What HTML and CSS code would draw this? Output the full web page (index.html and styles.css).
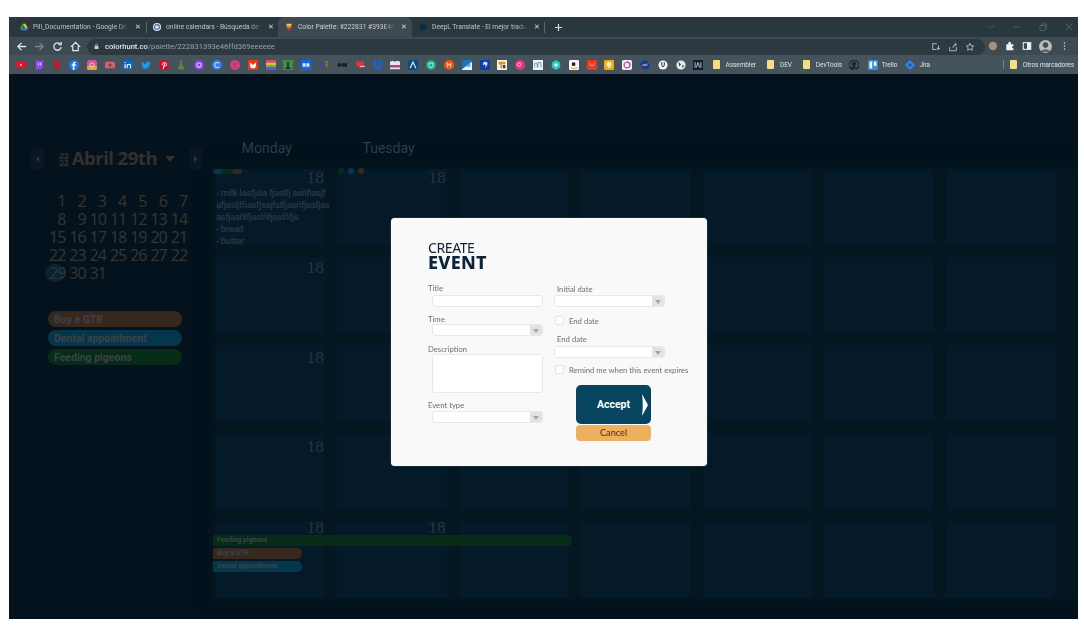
FILE: index.html
```html
<!DOCTYPE html>
<html lang="en">
<head>
<meta charset="utf-8">
<title>Calendar</title>
<link rel="stylesheet" href="styles.css">
</head>
<body>
<div class="browser">
  <div class="chrome">
    <div class="tabstrip">
      <div class="tab">
        <svg class="fav" viewBox="0 0 12 12"><path d="M4 1h4l4 7H8z" fill="#f4c20d"/><path d="M4 1 0 8l2 3 4-7z" fill="#1fa463"/><path d="M2 11h8l2-3H4z" fill="#4285f4"/></svg>
        <span class="tab-title">Pill_Documentation - Google Dri</span><span class="tab-x">✕</span>
      </div>
      <div class="tab tab-sep">
        <svg class="fav" viewBox="0 0 12 12"><circle cx="6" cy="6" r="6" fill="#e8e8e8"/><circle cx="6" cy="6" r="3.6" fill="none" stroke="#3d7fd8" stroke-width="2"/><path d="M6 2.400a3.600 3.600 0 0 1 3.100 1.800" fill="none" stroke="#c94a3d" stroke-width="2"/></svg>
        <span class="tab-title">online calendars - Búsqueda de G</span><span class="tab-x">✕</span>
      </div>
      <div class="tab tab-active">
        <svg class="fav" viewBox="0 0 12 12"><path d="M2 1h8l-.5 3h-7z" fill="#f4d33c"/><path d="M2.500 4h7l-.5 3h-6z" fill="#e9923a"/><path d="M3 7h6l-1 4H4z" fill="#c23a3a"/></svg>
        <span class="tab-title">Color Palette: #222831 #393E46 #</span><span class="tab-x">✕</span>
      </div>
      <div class="tab tab-last">
        <svg class="fav" viewBox="0 0 12 12"><path d="M6 0l5 3v6l-5 3-5-3V3z" fill="#0c2d48"/></svg>
        <span class="tab-title">DeepL Translate - El mejor traduc</span><span class="tab-x">✕</span>
      </div>
      <div class="tab-plus">
        <svg viewBox="0 0 10 10" class="ico-plus"><path d="M5 1v8M1 5h8" stroke="#d5dadc" stroke-width="1.300"/></svg>
      </div>
      <div class="win-ctrls">
        <svg viewBox="0 0 10 10"><path d="M2 3.500l3 3 3-3" fill="none" stroke="#525e65"/></svg>
        <svg viewBox="0 0 10 10"><path d="M2 5h6" stroke="#525e65"/></svg>
        <svg viewBox="0 0 10 10"><path d="M2 3.500h5v5H2zM3.500 3.500V2H8.500v5H7" fill="none" stroke="#525e65"/></svg>
        <svg viewBox="0 0 10 10"><path d="M1.500 1.500l7 7M8.500 1.500l-7 7" stroke="#525e65"/></svg>
      </div>
    </div>
    <div class="toolbar">
      <div class="nav">
        <svg viewBox="0 0 12 12"><path d="M11 6H2M6 2 2 6l4 4" fill="none" stroke="#dfe3e5" stroke-width="1.400"/></svg>
        <svg viewBox="0 0 12 12"><path d="M1 6h9M6 2l4 4-4 4" fill="none" stroke="#78848b" stroke-width="1.400"/></svg>
        <svg viewBox="0 0 12 12"><path d="M10 6.500A4 4 0 1 1 8.800 3.200M10 1v3H7" fill="none" stroke="#dfe3e5" stroke-width="1.400"/></svg>
        <svg viewBox="0 0 12 12"><path d="M6 1.500 1.500 6H3v4.500h6V6h1.500z" fill="none" stroke="#dfe3e5" stroke-width="1.300"/></svg>
      </div>
      <div class="omnibox">
        <svg class="lock" viewBox="0 0 8 10"><rect x="1" y="4" width="6" height="5" fill="#c8cfd2"/><path d="M2.500 4V2.500a1.500 1.500 0 0 1 3 0V4" fill="none" stroke="#c8cfd2"/></svg>
        <span class="url"><b>colorhunt.co</b>/palette/222831393e46ffd369eeeeee</span>
        <span class="omni-icons">
          <svg viewBox="0 0 12 12"><path d="M7 2H2v7h5M9 4v5M7 7l2 2 2-2" fill="none" stroke="#c3cace"/></svg>
          <svg viewBox="0 0 12 12"><path d="M2 6v4.500h8V6M6 7c0-3 2-4 4-4M8 1l2 2-2 2" fill="none" stroke="#c3cace"/></svg>
          <svg viewBox="0 0 12 12"><path d="M6 1.500l1.400 3 3.100.3-2.300 2.100.7 3.100L6 8.400 3.100 10l.7-3.100L1.500 4.800l3.100-.3z" fill="none" stroke="#c3cace"/></svg>
        </span>
      </div>
      <div class="tool-right">
        <svg viewBox="0 0 12 12"><circle cx="6" cy="6" r="5" fill="#b58d6c"/><circle cx="6" cy="6" r="2" fill="#8c9aa2"/></svg>
        <svg viewBox="0 0 12 12"><path d="M1.500 4H4V2.500a1.500 1.500 0 0 1 3 0V4h3v2.500H8.500v2H10V11H1.500z" fill="#eef0f1"/></svg>
        <svg viewBox="0 0 12 12"><rect x="1.500" y="2" width="9" height="8" fill="none" stroke="#eef0f1" stroke-width="1.300"/><rect x="6" y="2" width="4.500" height="8" fill="#eef0f1"/></svg>
        <svg class="avatar" viewBox="0 0 14 14"><circle cx="7" cy="7" r="7" fill="#b9bec0"/><circle cx="7" cy="5.500" r="3" fill="#4b4f52"/><path d="M2 13c1-4 9-4 10 0z" fill="#5d6265"/></svg>
        <svg class="dots" viewBox="0 0 4 12"><circle cx="2" cy="2" r="1" fill="#dfe3e5"/><circle cx="2" cy="6" r="1" fill="#dfe3e5"/><circle cx="2" cy="10" r="1" fill="#dfe3e5"/></svg>
      </div>
    </div>
    <div class="bookmarks">
      <svg class="bm" viewBox="0 0 12 12"><rect y="2" width="12" height="8" rx="2" fill="#e8102a"/><path d="M5 4.500v3l2.500-1.500z" fill="#fff"/></svg>
      <svg class="bm" viewBox="0 0 12 12"><path d="M2 1h9v7l-3 3H5l-1 1v-1H2z" fill="#9146ff"/><path d="M5.500 3.500v3M8 3.500v3" stroke="#fff"/></svg>
      <svg class="bm" viewBox="0 0 12 12"><path d="M3 0h2l2 8V0h2v12H7L5 5v7H3z" fill="#d40f1e"/></svg>
      <svg class="bm" viewBox="0 0 12 12"><circle cx="6" cy="6" r="6" fill="#1778f2"/><path d="M6.500 12V7H8l.3-1.800H6.500V4.300c0-.6.3-.9 1-.9h.8V2H7c-1.500 0-2.400.9-2.400 2.300v.9H3.300V7h1.300v5z" fill="#fff"/></svg>
      <svg class="bm" viewBox="0 0 12 12"><rect width="12" height="12" rx="3" fill="#d2569a"/><rect y="7" width="12" height="5" rx="2" fill="#e9a23b"/><circle cx="6" cy="6" r="2.500" fill="none" stroke="#f2d3e3"/></svg>
      <svg class="bm" viewBox="0 0 12 12"><rect y="2" width="12" height="8" rx="2" fill="#d6616e"/><circle cx="6" cy="6" r="2" fill="#8e3f4a"/></svg>
      <svg class="bm" viewBox="0 0 12 12"><rect width="12" height="12" rx="1" fill="#0a66c2"/><path d="M2.500 5v5M2.500 2.500v1M5 10V5M5 7c0-2 4-3 4 0v3" fill="none" stroke="#fff" stroke-width="1.300"/></svg>
      <svg class="bm" viewBox="0 0 12 12"><path d="M0 10c6 2 11-1 10.500-6L12 2.500l-1.700.3C9 1 6 2 6.300 4.500 4 4.500 2.500 3.500 1 2c-.7 1.400-.2 3 .8 3.800L.8 5.500c0 1.300 1 2.300 2 2.600l-1 .1c.3.800 1 1.300 2 1.400-1 .6-2.400.7-3.800.4z" fill="#1d9bf0"/></svg>
      <svg class="bm" viewBox="0 0 12 12"><circle cx="6" cy="6" r="6" fill="#e60023"/><path d="M5 11l1.500-6.500M4 6c-1-3 5-4 5-1 0 3-3 3-3 1.500" fill="none" stroke="#fff" stroke-width="1.200"/></svg>
      <svg class="bm" viewBox="0 0 12 12"><path d="M5 0h2v5l3 6H2l3-6z" fill="#5d8a3a"/></svg>
      <svg class="bm" viewBox="0 0 12 12"><circle cx="6" cy="6" r="6" fill="#8d3fe0"/><rect x="3.500" y="3.500" width="5" height="5" rx="2" fill="none" stroke="#e6d6fa" stroke-width="1.300"/></svg>
      <svg class="bm" viewBox="0 0 12 12"><circle cx="6" cy="6" r="6" fill="#2f7fe0"/><path d="M8.500 4A3 3 0 1 0 8.500 8" fill="none" stroke="#cbe3fa" stroke-width="1.400"/></svg>
      <svg class="bm" viewBox="0 0 12 12"><circle cx="6" cy="6" r="6" fill="#d9427e"/><path d="M2 3.500c3 1 6 4 7 8M1 7c3-2 7-3 10-2M7.500 1c-2 3-3 6-3 10" fill="none" stroke="#a5285a" stroke-width=".7"/></svg>
      <svg class="bm" viewBox="0 0 12 12"><rect width="12" height="12" fill="#e63b16"/><path d="M2.500 3v3.500a3.500 3.500 0 0 0 7 0V3L6 6z" fill="#fff"/></svg>
      <svg class="bm" viewBox="0 0 12 12"><rect width="12" height="3" fill="#e93a8c"/><rect y="3" width="12" height="3" fill="#f5b32c"/><rect y="6" width="12" height="3" fill="#3ac46a"/><rect y="9" width="12" height="3" fill="#7a4ae0"/></svg>
      <svg class="bm" viewBox="0 0 12 12"><rect width="12" height="12" fill="#3c8c4a"/><path d="M6 2v8M3 10h6" stroke="#10240f" stroke-width="1.600"/></svg>
      <svg class="bm" viewBox="0 0 12 12"><rect width="12" height="12" rx="1" fill="#1266e8"/><path d="M2 4h3.500v4H2zM6.500 4H10v4H6.500z" fill="#dfe9fb"/></svg>
      <svg class="bm" viewBox="0 0 12 12"><path d="M0 3l2 6 2-5 2 5 1.500-6z" fill="#3f3fb0"/><path d="M7.500 2h3v4h-3zM8 6l2.500 4" fill="none" stroke="#a3762c" stroke-width="1.200"/></svg>
      <svg class="bm" viewBox="0 0 12 12"><circle cx="3" cy="6" r="2.500" fill="#1b2126"/><circle cx="8" cy="6" r="2.500" fill="#1b2126"/><rect x="10" y="3.500" width="2" height="5" fill="#1b2126"/></svg>
      <svg class="bm" viewBox="0 0 12 12"><path d="M6 10.500 1 5.500a3 3 0 0 1 5-3 3 3 0 0 1 5 3z" fill="#e5333f"/><path d="M6 7h6v1.500H6z" fill="#e8b7bb"/></svg>
      <svg class="bm" viewBox="0 0 12 12"><path d="M3 1 0 3l3 2 3-2zM9 1 6 3l3 2 3-2zM3 5 0 7l3 2 3-2zM9 5 6 7l3 2 3-2zM6 8l-3 2 3 2 3-2z" fill="#0f62fe"/></svg>
      <svg class="bm" viewBox="0 0 12 12"><path d="M0 2l3-1 3 1 3-1 3 1v9H0z" fill="#ece4ea"/><rect y="6" width="12" height="3" fill="#b0497f"/></svg>
      <svg class="bm" viewBox="0 0 12 12"><rect width="12" height="12" fill="#0c4a82"/><path d="M2.500 10 6 2.500 9.500 10" fill="none" stroke="#e4edf5" stroke-width="1.300"/></svg>
      <svg class="bm" viewBox="0 0 12 12"><circle cx="6" cy="6" r="6" fill="#1ca88a"/><path d="M3.500 3.500h5v3a2.500 2.500 0 0 1-5 0z" fill="none" stroke="#cdf1ea" stroke-width="1.200"/></svg>
      <svg class="bm" viewBox="0 0 12 12"><circle cx="6" cy="6" r="6" fill="#f0540d"/><path d="M4 8.500v-5l2 3 2-3v5" fill="none" stroke="#fbe3d6" stroke-width="1.100"/></svg>
      <svg class="bm" viewBox="0 0 12 12"><rect width="12" height="12" fill="#1b72b8"/><path d="M0 11 12 2v10H0z" fill="#e6f2fa"/><path d="M5 8l5-6v6z" fill="#3fb0e6"/></svg>
      <svg class="bm" viewBox="0 0 12 12"><rect width="12" height="12" fill="#0d3fa8"/><path d="M6 2c3 0 4 2 2 5l-2 3c1-3 1-4 0-5-1 0-2 1-2 2-1-3 0-5 2-5z" fill="#dbe5f9"/></svg>
      <svg class="bm" viewBox="0 0 12 12"><rect width="12" height="12" fill="#f1efe6"/><path d="M2 2h8v3H6v5H4V5H2z" fill="#d89a1e"/><rect x="7" y="6" width="3" height="4" fill="#40423e"/></svg>
      <svg class="bm" viewBox="0 0 12 12"><circle cx="6" cy="6" r="6" fill="#e8357c"/><circle cx="5" cy="5.500" r="2" fill="none" stroke="#fbd9e7" stroke-width="1.200"/></svg>
      <svg class="bm" viewBox="0 0 12 12"><rect width="12" height="12" fill="#eef2f5"/><path d="M2 9V4h3v5M6 9V3h3l1 6" fill="none" stroke="#5a8fb8"/></svg>
      <svg class="bm" viewBox="0 0 12 12"><path d="M6 0l5 3v6l-5 3-5-3V3z" fill="#25c9c0"/><circle cx="6" cy="6" r="2.200" fill="#d8f7f5"/></svg>
      <svg class="bm" viewBox="0 0 12 12"><rect width="12" height="12" rx="1.500" fill="#f8f8f8"/><path d="M3.500 3h4v4h-4z" fill="#1f1f1f"/><path d="M2 9c3 1.500 6 1.500 8 0" fill="none" stroke="#f29b1f" stroke-width="1.300"/></svg>
      <svg class="bm" viewBox="0 0 12 12"><rect width="12" height="12" rx="1.500" fill="#e8381f"/><path d="M3 4c1 4 5 4 6 0" fill="none" stroke="#f8d7cc"/></svg>
      <svg class="bm" viewBox="0 0 12 12"><rect width="12" height="12" rx="1.500" fill="#f0a912"/><circle cx="6" cy="5" r="3" fill="#fdf2c8"/><rect x="4.500" y="8" width="3" height="1.500" fill="#fdf2c8"/></svg>
      <svg class="bm" viewBox="0 0 12 12"><rect width="12" height="12" rx="2" fill="#f3eef7"/><circle cx="6" cy="6" r="3.500" fill="none" stroke="#d94ea4" stroke-width="1.600"/><path d="M6 2.500a3.500 3.500 0 0 1 3.500 3.500" fill="none" stroke="#4a78e0" stroke-width="1.600"/></svg>
      <svg class="bm" viewBox="0 0 12 12"><circle cx="6" cy="6" r="5.500" fill="#0e3d91"/><path d="M1 8c3-1 7-3 10-5" stroke="#e3342f" fill="none"/><path d="M3 6h6" stroke="#e4e9f4"/></svg>
      <svg class="bm" viewBox="0 0 12 12"><circle cx="6" cy="6" r="5.500" fill="#f3f5f6"/><path d="M4.500 2.500v4a1.500 1.500 0 0 0 3 0v-4" fill="none" stroke="#2c3840" stroke-width="1.200"/></svg>
      <svg class="bm" viewBox="0 0 12 12"><circle cx="6" cy="6" r="5.500" fill="#e8ecee"/><path d="M3 2l3 3-2 3zM8 6l2 1-3 3z" fill="#38444c"/></svg>
      <svg class="bm" viewBox="0 0 12 12"><rect width="12" height="12" rx="1" fill="#131b2e"/><path d="M4 9 6 3l2 6M2.500 2.500v7M9.500 2.500v7" fill="none" stroke="#d8dde4"/></svg>
      <div class="folder"><i></i>Assembler</div>
      <div class="folder"><i></i>DEV</div>
      <div class="folder"><i></i>DevTools</div>
      <svg class="bm bm-gh" viewBox="0 0 12 12"><path d="M6 .5a5.500 5.500 0 0 0-2 10.700V9.500c-1.500.3-2-.7-2.200-1.300M8 11.200A5.500 5.500 0 0 0 6 .5" fill="none" stroke="#1d262b" stroke-width="1.500"/><path d="M3.500 2.500h5v4h-5zM4.500 6.500h3v4.500h-3z" fill="#1d262b"/></svg>
      <div class="link"><svg class="bm" viewBox="0 0 12 12"><rect width="12" height="12" rx="1" fill="#3c8fd0"/><rect x="2" y="2" width="3" height="8" fill="#fff"/><rect x="7" y="2" width="3" height="5" fill="#fff"/></svg>Trello</div>
      <div class="link"><svg class="bm" viewBox="0 0 12 12"><path d="M6 0l6 6-6 6-6-6z" fill="#2684ff"/><path d="M6 3.500 8.500 6 6 8.500 3.500 6z" fill="#46555d"/></svg>Jira</div>
      <div class="folder other"><i></i>Otros marcadores</div>
    </div>
  </div>

  <div class="page">
    <aside class="side">
      <div class="month-head">
        <div class="arrow"><span class="tri-l"></span></div>
        <div class="year"><span>22</span><span>22</span></div>
        <div class="month">Abril 29th</div>
        <span class="caret"></span>
        <div class="arrow"><span class="tri-r"></span></div>
      </div>
      <div class="days">
        <span>1</span><span>2</span><span>3</span><span>4</span><span>5</span><span>6</span><span>7</span>
        <span>8</span><span>9</span><span>10</span><span>11</span><span>12</span><span>13</span><span>14</span>
        <span>15</span><span>16</span><span>17</span><span>18</span><span>19</span><span>20</span><span>21</span>
        <span>22</span><span>23</span><span>24</span><span>25</span><span>26</span><span>27</span><span>22</span>
        <span class="today">29</span><span>30</span><span>31</span>
      </div>
      <div class="events">
        <div class="event brown">Buy a GTR</div>
        <div class="event blue">Dental appointment</div>
        <div class="event green">Feeding pigeons</div>
      </div>
    </aside>
    <main class="cal">
      <div class="weekdays"><span>Monday</span><span>Tuesday</span></div>
      <div class="grid">
        <div class="cell">
          <div class="marks"><i class="blue"></i><i class="green"></i><i class="brown"></i></div>
          <div class="num">18</div>
          <div class="note">- milk lasfjsla fjaslfj asñflasjf<br>afjasljfñasfjsajfslfjasñfjsafjas<br>asfjasñlfjaslñfjaslñfjs<br>- bread<br>- butter</div>
        </div>
        <div class="cell">
          <div class="marks dotted"><i class="green"></i><i class="blue"></i><i class="brown"></i></div>
          <div class="num">18</div>
        </div>
        <div class="cell"></div><div class="cell"></div><div class="cell"></div><div class="cell"></div><div class="cell corner-tr"></div>
        <div class="cell"><div class="num num-r2">18</div></div>
        <div class="cell"></div><div class="cell"></div><div class="cell"></div><div class="cell"></div><div class="cell"></div><div class="cell"></div>
        <div class="cell"><div class="num num-r3">18</div></div>
        <div class="cell"></div><div class="cell"></div><div class="cell"></div><div class="cell"></div><div class="cell"></div><div class="cell"></div>
        <div class="cell"><div class="num num-r3">18</div></div>
        <div class="cell"></div><div class="cell"></div><div class="cell"></div><div class="cell"></div><div class="cell"></div><div class="cell"></div>
        <div class="cell">
          <div class="num num-r5">18</div>
          <div class="spans">
            <div class="span green wide">Feeding pigeons</div>
            <div class="span brown">Buy a GTR</div>
            <div class="span blue">Dental appointment</div>
          </div>
        </div>
        <div class="cell"><div class="num num-r5">18</div></div>
        <div class="cell"></div><div class="cell"></div><div class="cell"></div><div class="cell"></div><div class="cell corner-br"></div>
      </div>
    </main>

    <div class="modal">
      <h1 class="modal-title"><span>CREATE</span><b>EVENT</b></h1>
      <div class="form">
        <div class="col-left">
          <label class="lbl lbl-title">Title</label>
          <div class="input"></div>
          <label class="lbl">Time</label>
          <div class="input select sel-time"><i></i></div>
          <label class="lbl">Description</label>
          <div class="input area"></div>
          <label class="lbl lbl-type">Event type</label>
          <div class="input select"><i></i></div>
        </div>
        <div class="col-right">
          <label class="lbl">Initial date</label>
          <div class="input select"><i></i></div>
          <div class="check"><i></i>End date</div>
          <label class="lbl lbl-far">End date</label>
          <div class="input select"><i></i></div>
          <div class="check check-last"><i></i>Remind me when this event expires</div>
          <div class="actions">
            <button class="accept" type="button">Accept<svg viewBox="0 0 6 22"><path d="M0 0l6 11-6 11c1-7 1-15 0-22z" fill="#fff"/></svg></button>
            <button class="cancel" type="button">Cancel</button>
          </div>
        </div>
      </div>
    </div>
  </div>
</div>
</body>
</html>
```
FILE: styles.css
```css
* { box-sizing: border-box; }
html, body { margin: 0; height: 100%; background: #fff; overflow: hidden; }
.browser { margin: 17px 0 0 9px; width: 1069px; height: 602px; display: flex; flex-direction: column; }

/* browser chrome */
.chrome { font-family: "Roboto", "Liberation Sans", sans-serif; filter: blur(.3px); }
.tabstrip { height: 20px; background: #2b373e; display: flex; align-items: stretch; padding-left: 6px; }
.tab { width: 133px; display: flex; align-items: center; padding: 0 7.500px 0 5px; gap: 4px; font-size: 6.700px; color: #bcc5c9; position: relative; }
.tab-sep { width: 130px; padding-right: 4.500px; }
.tab-sep::before { content: ""; position: absolute; left: -2px; top: 5px; height: 11px; width: 1px; background: #5b676e; }
.tab-active { width: 134px; padding: 0 5.500px 0 7px; background: #3d4a52; border-radius: 6px 6px 0 0; color: #c9d0d3; }
.tab-last { width: 132px; padding: 0 4.500px 0 7px; }
.fav { width: 8px; height: 8px; flex: none; margin-right: 1px; }
.tab-title { flex: 1; min-width: 0; white-space: nowrap; -webkit-mask-image: linear-gradient(to right, #000 88%, transparent); mask-image: linear-gradient(to right, #000 88%, transparent); }
.tab-x { font-size: 7px; color: #d4dadd; margin-left: 2px; }
.tab-plus { width: 26px; display: flex; align-items: center; justify-content: center; margin-left: 1px; position: relative; }
.tab-plus::before { content: ""; position: absolute; left: -1px; top: 5px; height: 11px; width: 1px; background: #5b676e; }
.ico-plus { width: 9px; height: 9px; }
.win-ctrls { margin-left: auto; display: flex; align-items: center; gap: 16px; padding-right: 4px; }
.win-ctrls svg { width: 10px; height: 10px; }

.toolbar { height: 18px; background: #3d4a52; display: flex; align-items: center; }
.nav { display: flex; gap: 7px; padding-left: 7px; width: 78px; flex: none; }
.nav svg { width: 11px; height: 11px; }
.omnibox { flex: 1; height: 16px; margin-top: 1px; background: #2d3940; border-radius: 8px; display: flex; align-items: center; padding: 0 10px 0 7px; }
.lock { width: 5px; height: 7px; margin-right: 6px; }
.url { font-size: 7.600px; color: #98a2a7; white-space: nowrap; }
.url b { font-weight: 500; color: #dfe3e5; }
.omni-icons { margin-left: auto; display: flex; gap: 7px; }
.omni-icons svg { width: 10px; height: 10px; }
.tool-right { width: 93px; flex: none; display: flex; align-items: center; gap: 7px; padding-left: 3px; }
.tool-right svg { width: 10px; height: 10px; flex: none; }
.tool-right .avatar { width: 13px; height: 13px; }
.tool-right .dots { width: 3px; margin-left: 4px; }

.bookmarks { height: 19px; background: #45545c; display: flex; align-items: center; padding: 0 4px 0 7px; font-size: 6.400px; color: #dfe4e6; white-space: nowrap; }
.bm { width: 10px; height: 10px; flex: none; margin-right: 7.830px; }
.folder { display: flex; align-items: center; margin-right: 11.500px; }
.bm + .folder { margin-left: 1.700px; }
.folder i { width: 7px; height: 9px; background: #f5dc85; border-radius: 1px; margin-right: 5.500px; }
.folder.other { margin-left: auto; margin-right: 0; border-left: 1px solid #74828a; padding-left: 6px; }
.link { display: flex; align-items: center; margin-right: 8px; }
.link .bm { margin-right: 4px; }
.bm-gh { margin: 0 9px 0 -5px; }

/* dimmed page */
.page { flex: 1; position: relative; display: flex; background: #03121d; overflow: hidden; color: #2e3841; font-family: "Noto Sans", "Open Sans", sans-serif; }
.side { width: 205px; flex: none; padding: 74px 0 0 22px; position: relative; z-index: 1; }
.month-head { display: flex; align-items: center; height: 22px; color: #35302b; }
.arrow { width: 13px; height: 22px; background: #0a1722; display: flex; align-items: center; justify-content: center; border-radius: 2px; flex: none; }
.tri-l { border: 3px solid transparent; border-right-color: #2e3a43; border-left: 0; }
.tri-r { border: 3px solid transparent; border-left-color: #2e3a43; border-right: 0; }
.year { display: flex; flex-direction: column; font-size: 9px; line-height: 7.500px; font-weight: 700; letter-spacing: -.3px; margin: 0 3px 0 15px; }
.month { font-size: 18.600px; line-height: 22px; font-weight: 700; letter-spacing: -.5px; white-space: nowrap; margin-top: -3px; }
.caret { border: 5.500px solid transparent; border-top: 6px solid #35302b; border-bottom: 0; margin: 0 14px 0 8px; }
.days { display: grid; grid-template-columns: repeat(7, 20.300px); grid-auto-rows: 18px; margin: 22px 0 0 14px; font-size: 16px; line-height: 18px; color: #38332e; text-align: right; letter-spacing: -1px; }
.today { background: #062436; border-radius: 9px; }
.events { margin: 29px 0 0 17px; width: 134px; display: flex; flex-direction: column; gap: 3px; font-family: "Roboto", sans-serif; }
.event { height: 16px; border-radius: 8px; font-size: 10.500px; font-weight: 700; line-height: 17px; padding-left: 6px; color: #3c4248; }
.brown { background: #37281e; }
.blue { background: #05374c; }
.green { background: #062c18; }

.cal { flex: 1; min-width: 0; padding: 64px 0 0 1px; }
.weekdays { display: grid; grid-template-columns: repeat(2, 121.700px); height: 31px; margin-left: -9px; font-family: "Roboto", sans-serif; font-size: 14px; text-align: center; color: #303c47; line-height: 20px; }
.grid { display: grid; grid-template-columns: repeat(7, 109.700px); gap: 12.200px; grid-auto-rows: 76px; background: #04161f; box-shadow: 0 0 12px 6px #04161f; }
.cell { background: #041a29; position: relative; }
.corner-tr { border-top-right-radius: 8px; }
.corner-br { border-bottom-right-radius: 8px; }
.num { font-family: "Liberation Serif", serif; font-size: 17px; text-align: right; line-height: 16px; padding: 1px 1px 0 0; color: #27343f; }
.num-r2 { padding-top: 3px; }
.num-r3 { padding-top: 5px; }
.num-r5 { padding-top: 0; margin-top: -2px; }
.marks { position: absolute; top: 0; left: -2px; display: flex; }
.marks i { width: 9.500px; height: 5px; border-radius: 3px; }
.marks.dotted { left: 1px; gap: 4px; top: -1px; }
.marks.dotted i { width: 6px; height: 6px; }
.note { position: absolute; left: 1px; top: 18px; width: 116px; font-family: "Roboto", sans-serif; font-size: 9.300px; line-height: 12px; font-weight: 500; letter-spacing: -.3px; color: #2c3843; white-space: nowrap; z-index: 1; }
.spans { position: absolute; left: -2px; top: 13px; display: flex; flex-direction: column; gap: 2px; z-index: 1; width: 89px; font-family: "Roboto", sans-serif; }
.span { height: 11px; border-radius: 0 5px 5px 0; font-size: 6.800px; font-weight: 700; line-height: 11px; padding-left: 4px; color: #3c444a; white-space: nowrap; }
.span.wide { width: 359px; }

/* modal */
.modal { position: absolute; z-index: 2; left: 382px; top: 144px; width: 316px; height: 248px; background: #f9f9f9; border-radius: 4px; padding: 22px 0 0 37px; font-family: "Lato", "Open Sans", sans-serif; box-shadow: 0 0 1px #b8bcbf; filter: blur(.2px); }
.modal-title { margin: 0; color: #0c2338; font-weight: 400; display: flex; flex-direction: column; font-family: "Noto Sans", sans-serif; }
.modal-title span { font-size: 14px; line-height: 15px; letter-spacing: -.4px; }
.modal-title b { font-size: 18px; line-height: 15px; letter-spacing: .3px; font-weight: 800; }
.form { display: flex; margin-top: 13px; }
.col-left { width: 126px; }
.col-right { width: 140px; padding-top: 1px; }
.lbl { display: block; font-size: 7.700px; line-height: 10px; height: 10px; color: #6f6d75; }
.lbl-title { margin-bottom: 2px; }
.lbl-type { margin-bottom: 1px; }
.input { width: 111px; height: 12px; background: #fff; border: 1px solid #e8e8e8; border-radius: 3px; position: relative; overflow: hidden; }
.col-left .input { margin: 0 0 7px 4px; }
.col-left .sel-time { margin-bottom: 8px; }
.col-left .area { height: 39px; }
.col-right .lbl { padding-left: 3px; margin-bottom: 1px; }
.col-right .lbl-far { margin-bottom: 2px; }
.select i { position: absolute; right: 0; top: 0; bottom: 0; width: 12px; background: #e3e3e3; }
.select i::after { content: ""; position: absolute; left: 2.500px; top: 3.500px; border: 3.500px solid transparent; border-top: 4px solid #a5a5a5; border-bottom: 0; }
.check { display: flex; align-items: center; font-size: 7.700px; color: #6f6d75; height: 11px; margin: 8px 0 8px 1px; white-space: nowrap; }
.check-last { margin: 6px 0 0 1px; }
.check i { width: 9px; height: 9px; background: #fff; border: 1px solid #e5e5e5; border-radius: 2px; margin-right: 5px; }
.actions { display: flex; flex-direction: column; gap: 1px; width: 75px; margin: 10px 0 0 22px; }
button { border: 0; padding: 0; font-family: inherit; }
.accept { height: 39px; background: #07445f; border-radius: 5px; color: #fff; font-family: "Roboto", sans-serif; font-size: 10.500px; font-weight: 700; position: relative; }
.accept svg { position: absolute; right: 3px; top: 9px; width: 6px; height: 22px; }
.cancel { height: 16px; background: #edb05f; border-radius: 4px; color: #4a2a22; font-size: 9.200px; line-height: 16px; }
```
